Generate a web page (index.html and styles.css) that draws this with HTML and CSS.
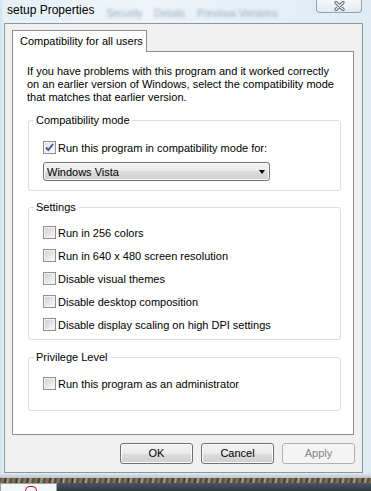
FILE: index.html
```html
<!DOCTYPE html>
<html lang="en">
<head>
    <meta charset="UTF-8">
    <title>setup Properties</title>
    <link rel="stylesheet" href="styles.css">
</head>
<body>
    <div class="window">
        <div class="titlebar">
            <span class="title">setup Properties</span>
            <span class="behind">
                <span>Security</span>
                <span>Details</span>
                <span>Previous Versions</span>
            </span>
            <span class="close">
                <svg width="11" height="10" viewBox="0 0 11 10">
                    <path d="M2 1.5 L9 8.5 M9 1.5 L2 8.5" stroke="#5e6873" stroke-width="3.2" stroke-linecap="round"/>
                    <path d="M2 1.5 L9 8.5 M9 1.5 L2 8.5" stroke="#eef1f4" stroke-width="1.4" stroke-linecap="round"/>
                </svg>
            </span>
        </div>
        <div class="client">
            <div class="tabs">
                <div class="tab">Compatibility for all users</div>
            </div>
            <div class="panel">
                <p class="intro">If you have problems with this program and it worked correctly<br>on an earlier version of Windows, select the compatibility mode<br>that matches that earlier version.</p>

                <fieldset class="group compat">
                    <legend>Compatibility mode</legend>
                    <div class="row">
                        <span class="box checked">
                            <svg width="11" height="11" viewBox="0 0 11 11"><path d="M2 5.5 L4.3 8 L9 2" fill="none" stroke="#3b5c9e" stroke-width="1.9"/></svg>
                        </span>
                        Run this program in compatibility mode for:
                    </div>
                    <div class="select">Windows Vista<span class="arrow"></span></div>
                </fieldset>

                <fieldset class="group settings">
                    <legend>Settings</legend>
                    <div class="row tall"><span class="box"></span>Run in 256 colors</div>
                    <div class="row tall"><span class="box"></span>Run in 640 x 480 screen resolution</div>
                    <div class="row tall"><span class="box"></span>Disable visual themes</div>
                    <div class="row tall"><span class="box"></span>Disable desktop composition</div>
                    <div class="row tall"><span class="box"></span>Disable display scaling on high DPI settings</div>
                </fieldset>

                <fieldset class="group privilege">
                    <legend>Privilege Level</legend>
                    <div class="row tall"><span class="box"></span>Run this program as an administrator</div>
                </fieldset>
            </div>
            <div class="buttons">
                <span class="btn">OK</span>
                <span class="btn">Cancel</span>
                <span class="btn disabled">Apply</span>
            </div>
        </div>
        <div class="glass-bottom"></div>
        <div class="desktop"></div>
        <div class="taskbar">
            <span class="taskbtn"><span class="ticon"></span></span>
        </div>
    </div>
</body>
</html>
```
FILE: styles.css
```css
body { margin:0; font-family:"Liberation Sans", Arial, sans-serif; font-size:11px; color:#000; }
.window { width:371px; height:491px; overflow:hidden;
    background:linear-gradient(90deg, #cfe3f0 0, #e6f0f7 4px, #eef4f9 40%, #e4eff6 70%, #dfecf4 100%); }

.titlebar { display:flex; height:23px; align-items:flex-start; }
.title { padding:2px 0 0 7px; font-size:12px; line-height:16px; }
.behind { display:flex; gap:12px; margin:7px 0 0 12px; color:#9aa9b6; filter:blur(1.4px); font-size:10px; line-height:13px; white-space:nowrap; }
.close { margin:-1px 9px 0 auto; width:46px; height:14px; box-sizing:border-box;
    border:1px solid #97a2ad; border-top:0; border-radius:0 0 4px 4px;
    background:linear-gradient(#f6f9fb, #e3eaf0); display:flex; justify-content:center; align-items:center; }

.client { margin-left:4px; width:359px; height:450px; box-sizing:border-box;
    border:1px solid #8c97a2; background:#f0f0f0; padding:6px 0 0 7px; }
.tabs { display:flex; }
.tab { position:relative; z-index:1; width:135px; height:22px; box-sizing:border-box; margin-bottom:-1px;
    border:1px solid #898c95; border-bottom:0; background:#fff; padding:1px 0 0 7px; line-height:19px; }
.panel { width:342px; height:384px; box-sizing:border-box; border:1px solid #898c95; background:#fff; }
.intro { margin:0; padding:13px 0 0 14px; line-height:13px; }

.group { margin:9px 12px 0 15px; padding:0 0 0 5px; border:1px solid #d5dfe5; border-radius:3px; min-width:0; }
.group legend { padding:0 2px; line-height:14px; }
.compat { padding-top:13px; padding-bottom:9px; }
.settings { padding-top:7px; padding-bottom:3px; }
.privilege { margin-top:10px; padding-top:8px; padding-bottom:15px; }

.row { display:flex; align-items:center; height:15px; margin-left:9px; white-space:nowrap; }
.row.tall { height:23px; }
.box { width:13px; height:13px; box-sizing:border-box; margin-right:2px; flex:none;
    border:1px solid #8e8f8f; box-shadow:inset 0 0 0 1px #f4f4f4;
    background:linear-gradient(135deg, #c9ccd1, #eceef0 70%, #f6f6f6); }
.box.checked { display:flex; align-items:center; justify-content:center;
    background:linear-gradient(135deg, #dfe3ea, #f6f7f9); }

.select { display:flex; justify-content:space-between; align-items:center; margin:7px 0 0 9px;
    width:227px; height:19px; box-sizing:border-box; padding-left:3px;
    border:1px solid #707070; border-radius:3px;
    background:linear-gradient(#f2f2f2 0, #ebebeb 50%, #dddddd 50%, #cfcfcf 100%); box-shadow:inset 0 0 0 1px #fafafa; }
.arrow { width:0; height:0; margin-right:4px; border-left:3.5px solid transparent; border-right:3.5px solid transparent; border-top:4px solid #000; }

.buttons { display:flex; justify-content:flex-end; gap:8px; margin-top:8px; padding-right:7px; }
.btn { width:73px; height:21px; box-sizing:border-box; text-align:center; line-height:19px;
    border:1px solid #707070; border-radius:3px; box-shadow:inset 0 0 0 1px #fcfcfc;
    background:linear-gradient(#f2f2f2 0, #ebebeb 50%, #dddddd 50%, #cfcfcf 100%); }
.btn.disabled { border-color:#adb2b5; background:#f4f4f4; color:#838383; box-shadow:none; }

.glass-bottom { height:5px; background:linear-gradient(#e2ebf1, #b9c3c9); }
.desktop { height:5px; background:repeating-linear-gradient(100deg, #5b4a36 0, #8a7860 3px, #3e3428 6px, #b3a48c 8px, #4e4030 11px); }
.taskbar { height:8px; background:linear-gradient(#4a5660, #2e3840); display:flex; }
.taskbtn { width:57px; box-sizing:border-box; border:1px solid #9aa3aa; border-bottom:0; background:#f4f6f8; position:relative; }
.ticon { position:absolute; left:24px; top:2px; width:10px; height:4px; border-radius:5px 5px 0 0; border:1px solid #c01010; border-bottom:0; }
```
